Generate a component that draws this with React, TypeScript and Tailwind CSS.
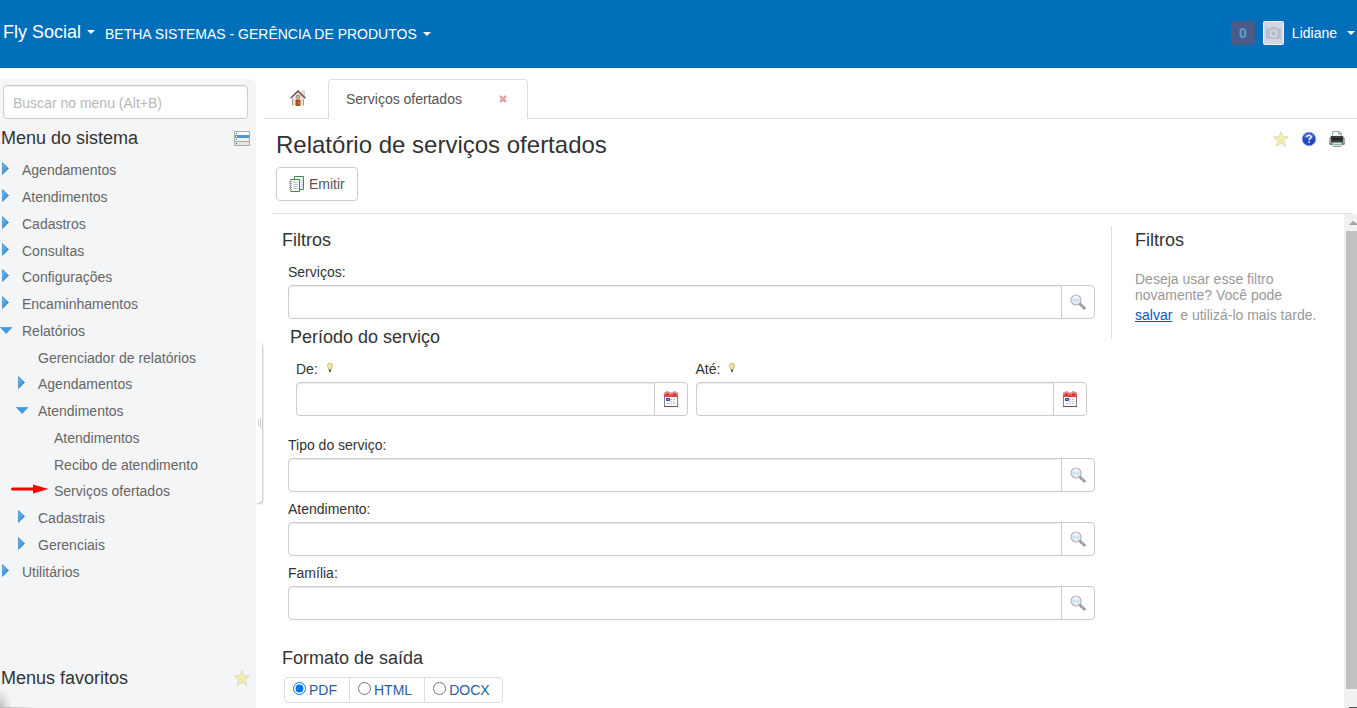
import { useState } from "react";
import type { ReactNode } from "react";

type MenuItem = {
  label: string;
  level: 0 | 1 | 2;
  state?: "open" | "closed";
  marked?: boolean;
};

const menu: MenuItem[] = [
  { label: "Agendamentos", level: 0, state: "closed" },
  { label: "Atendimentos", level: 0, state: "closed" },
  { label: "Cadastros", level: 0, state: "closed" },
  { label: "Consultas", level: 0, state: "closed" },
  { label: "Configurações", level: 0, state: "closed" },
  { label: "Encaminhamentos", level: 0, state: "closed" },
  { label: "Relatórios", level: 0, state: "open" },
  { label: "Gerenciador de relatórios", level: 1 },
  { label: "Agendamentos", level: 1, state: "closed" },
  { label: "Atendimentos", level: 1, state: "open" },
  { label: "Atendimentos", level: 2 },
  { label: "Recibo de atendimento", level: 2 },
  { label: "Serviços ofertados", level: 2, marked: true },
  { label: "Cadastrais", level: 1, state: "closed" },
  { label: "Gerenciais", level: 1, state: "closed" },
  { label: "Utilitários", level: 0, state: "closed" },
];

const indent = { 0: "pl-0", 1: "pl-4", 2: "pl-8" };

function Caret() {
  return (
    <svg width="8" height="4" viewBox="0 0 8 4" className="mb-px fill-white" aria-hidden="true">
      <path d="M0 0h8L4 4z" />
    </svg>
  );
}

function StarIcon() {
  return (
    <svg width="16" height="16" viewBox="0 0 16 16" aria-hidden="true">
      <path
        d="M8 .6l1.9 5.1 5.6.2-4.4 3.4 1.6 6L8 12l-4.7 3.3 1.6-6L.5 5.900l5.600-.2z"
        fill="#f5efb4"
        stroke="#ddd7b8"
        strokeWidth=".9"
      />
      <path d="M8 7l.8 2h2.200l-1.700 1.400.9 2.300L8 11.300l-2.200 1.400.9-2.300L5 9h2.200z" fill="#eee698" />
    </svg>
  );
}

function HelpIcon() {
  return (
    <svg width="16" height="16" viewBox="0 0 16 16" aria-hidden="true">
      <circle cx="8" cy="8" r="6.800" fill="#2447c0" stroke="#8fa3dd" strokeWidth=".8" />
      <path d="M2.500 6.500a5.700 5.700 0 0 1 11 0c-3 1.200-8 1.200-11 0z" fill="#4c6cd8" />
      <path d="M5.900 6.300c0-2.600 4.300-2.600 4.300-.2 0 1.500-2.100 1.500-2.100 3.200" fill="none" stroke="#fff" strokeWidth="1.500" />
      <path d="M7.300 10.500h1.600v1.600H7.300z" fill="#fff" />
    </svg>
  );
}

function PrinterIcon() {
  return (
    <svg width="16" height="16" viewBox="0 0 16 16" aria-hidden="true">
      <path d="M3.500.5h7l2 2V7h-9z" fill="#edf5f5" stroke="#9fb0ae" />
      <path d="M10 .5v2.500h2.500" fill="none" stroke="#7f918f" />
      <path d="M0 8l2-3h12l2 3v5l-1 1H1l-1-1z" fill="#858988" />
      <path d="M2 5h12v6H2z" fill="#3b3e3e" />
      <path d="M3 7h10v2H3z" fill="#232525" />
      <path d="M0 8h2v4H0zM14 8h2v4h-2z" fill="#a9adac" />
      <path d="M3.500 11.500h9v3l-1 1h-7l-1-1z" fill="#d7e6e4" stroke="#7c8c8a" strokeWidth=".8" />
      <path d="M5 13.500h6" stroke="#76b8ae" />
      <path d="M13 11h2v1h-2z" fill="#49c462" />
    </svg>
  );
}

function HouseIcon() {
  return (
    <svg width="16" height="16" viewBox="0 0 16 16" aria-hidden="true">
      <path d="M12 1h2.500v6H12z" fill="#f1ddd2" stroke="#cbb4a9" strokeWidth=".6" />
      <path d="M2.500 8L8 2.200 13.500 8v7.500h-11z" fill="#f2dccd" />
      <path d="M2.500 9v6.500M13.500 9v6.500" stroke="#b29889" />
      <path d="M.7 8.300L8 1l7.300 7.300" fill="none" stroke="#62504b" strokeWidth="1.500" />
      <path d="M6.700 5.500h2.600v2.600H6.700z" fill="#c7d3dc" stroke="#8b5a40" strokeWidth=".7" />
      <path d="M6 10h4v5.500H6z" fill="#b95a25" stroke="#7c3b19" strokeWidth=".8" />
      <path d="M8.500 12.500h1v1h-1z" fill="#f6c67a" />
    </svg>
  );
}

function ReportIcon() {
  return (
    <svg width="16" height="16" viewBox="0 0 16 16" aria-hidden="true">
      <path d="M5.500.5h9v13h-9z" fill="#f2f7fb" stroke="#3d9140" />
      <path d="M12 4.500h2M12 6.500h2M12 8.500h2M12 10.500h2" stroke="#bfd0e6" />
      <path d="M1 3h10v12.500H1z" fill="#fff" />
      <path d="M1.500 3.500h9v12h-9" fill="none" stroke="#3d8a40" />
      <path d="M1.500 4v11" stroke="#9aa59a" strokeDasharray="1 1" />
      <path d="M4 6.500h5M4 8.500h5M4 10.500h5M4 12.500h5" stroke="#bccbe6" />
      <path d="M0 5.500h3M0 7.500h3M0 9.500h3M0 11.500h3M0 13.500h3" stroke="#888" strokeWidth=".7" />
    </svg>
  );
}

function SearchIcon() {
  return (
    <svg width="16" height="16" viewBox="0 0 16 16" aria-hidden="true">
      <path d="M9.700 9.700l4.700 4.500" stroke="#858585" strokeWidth="2.600" strokeLinecap="round" />
      <path d="M10.500 10.300l3.700 3.600" stroke="#dedede" strokeWidth="1" />
      <circle cx="6" cy="6" r="5" fill="#e0edf8" stroke="#b5b7ba" strokeWidth="1.200" />
      <path d="M2.500 6.500c2-1.500 4.500.8 7-.5" fill="none" stroke="#bbd6ef" />
      <path d="M3 4.500a3.500 3.500 0 0 1 5.500-1" fill="none" stroke="#fff" />
    </svg>
  );
}

function CalendarIcon() {
  return (
    <svg width="16" height="16" viewBox="0 0 16 16" aria-hidden="true">
      <path d="M1.500 3.500h13v12h-13z" fill="#fbfdff" stroke="#8d8080" />
      <path d="M1 15.500h14" stroke="#6b5555" />
      <path d="M1 1.500h14V6H1z" fill="#e84444" />
      <path d="M1 2h14v1.500H1z" fill="#f6857e" />
      <path d="M4.500 0v4M11.500 0v4" stroke="#7d2424" strokeWidth="1.600" />
      <path d="M4.500 0v2.500M11.500 0v2.500" stroke="#f4d8d8" strokeWidth=".7" />
      <path d="M7 8.500h6M7 10.500h6M4 12.500h9" stroke="#b1c5dc" strokeDasharray="2 1" />
      <path d="M3.500 7.500h3v2h-3z" fill="#6f98ee" stroke="#2145bd" />
    </svg>
  );
}

function BulbIcon() {
  return (
    <svg width="6" height="10" viewBox="0 0 6 10" className="mb-[2px]" aria-hidden="true">
      <path d="M3 .3c3 0 3.200 2.700 1.500 4.700v2h-3V5C-.2 3 0 .3 3 .3z" fill="#ecdb8d" stroke="#bba566" strokeWidth=".6" />
      <path d="M2 2h1v3H2z" fill="#fffbe0" />
      <path d="M2 6.500h2V9H2z" fill="#66635c" />
    </svg>
  );
}

function ListIcon() {
  return (
    <svg width="16" height="15" viewBox="0 0 16 15" shapeRendering="crispEdges" aria-hidden="true">
      <path d="M0 0h16v15H0z" fill="#ababab" />
      <path d="M1 1h14v3H1z" fill="#fbfbfb" />
      <path d="M1 4h14v3H1z" fill="#4b9bd9" />
      <path d="M1 7h14v3H1z" fill="#f0f0f0" />
      <path d="M1 11h14v3H1z" fill="#e4e4e4" />
      <path d="M2 2h1v1H2zM2 8h1v1H2zM2 12h1v1H2z" fill="#555" />
      <path d="M2 5h1v1H2z" fill="#fff" />
    </svg>
  );
}

function TreeArrow({ state }: { state: "open" | "closed" }) {
  return (
    <svg width="13" height="16" viewBox="0 0 13 16" aria-hidden="true">
      <defs>
        <linearGradient id="tree-arrow" x1="0" y1="0" x2="1" y2="1">
          <stop offset="0" stopColor="#7cc0ef" />
          <stop offset="1" stopColor="#2179c4" />
        </linearGradient>
      </defs>
      {state === "open" ? (
        <path d="M.5 4.500h11.500L6.200 10.500z" fill="#3a9fe2" stroke="#4b9bd6" strokeWidth=".8" />
      ) : (
        <path d="M2.500.6L8.600 6.400 2.500 12.400z" fill="url(#tree-arrow)" stroke="#3f8fd0" strokeWidth=".8" />
      )}
    </svg>
  );
}

function Header() {
  return (
    <header className="flex h-[68px] items-center bg-[#006fba] pr-[2px] pl-[3px] text-white">
      <button type="button" className="mb-1 flex items-center gap-[6px] text-lg leading-5">
        Fly Social
        <Caret />
      </button>
      <button type="button" className="ml-[10px] flex items-center gap-[6px] leading-5">
        BETHA SISTEMAS - GERÊNCIA DE PRODUTOS
        <Caret />
      </button>
      <div className="mb-[2px] ml-auto flex items-center gap-2">
        <span className="flex size-6 items-center justify-center rounded-xs bg-[#4c5a88] font-bold text-[#5a9fd4]">
          0
        </span>
        <button type="button" className="flex items-center gap-2">
          <svg width="21" height="24" viewBox="0 0 21 24" aria-hidden="true">
            <rect x=".5" y=".5" width="20" height="23" rx="1" fill="#d3d7df" stroke="#f0f2f5" />
            <path d="M3 7.500h4L8.500 5.500h4L14 7.500h4V18H3z" fill="#b7bfca" />
            <circle cx="10.500" cy="12.500" r="3.200" fill="#b7bfca" stroke="#d9dde4" strokeWidth="1.400" />
          </svg>
          Lidiane
          <span className="ml-[2px]">
            <Caret />
          </span>
        </button>
      </div>
    </header>
  );
}

function Sidebar() {
  return (
    <aside className="relative flex w-64 shrink-0 flex-col rounded-tr-md bg-[#f3f5f7] pt-[6px] text-[#666]">
      <input
        type="search"
        aria-label="Buscar no menu"
        placeholder="Buscar no menu (Alt+B)"
        className="mr-2 ml-[3px] h-[34px] rounded-sm border border-[#ccc] bg-white px-[9px] pt-[2px] shadow-[inset_0_1px_1px_rgba(0,0,0,0.08)] placeholder:text-[#b8b8b8]"
      />
      <div className="mt-[9px] flex items-center justify-between pr-[6px] pl-px">
        <h2 className="text-lg leading-5 text-[#333]">Menu do sistema</h2>
        <button type="button" aria-label="Exibir como lista">
          <ListIcon />
        </button>
      </div>
      <ul className="mt-[9px] grid h-[428px] auto-rows-fr">
        {menu.map((item, i) => (
          <li key={i} className={indent[item.level]}>
            <a href="#" className="relative flex h-full items-center">
              <span className="w-[22px]">{item.state && <TreeArrow state={item.state} />}</span>
              {item.label}
              {item.marked && (
                <svg width="38" height="10" viewBox="0 0 38 10" className="absolute top-[6px] -left-[21px]" aria-hidden="true">
                  <path d="M1.500 5H24" stroke="#f00" strokeWidth="3" strokeLinecap="round" />
                  <path d="M22 .5L37.500 5 22 9.500z" fill="#f00" />
                </svg>
              )}
            </a>
          </li>
        ))}
      </ul>
      <div className="mt-auto flex items-center justify-between pr-[6px] pb-5 pl-px">
        <h2 className="text-lg leading-5 text-[#333]">Menus favoritos</h2>
        <StarIcon />
      </div>
      <div className="pointer-events-none absolute bottom-0 left-0 h-5 w-3 bg-[radial-gradient(ellipse_at_bottom_left,#bcbdbf_0%,#e2e4e6_45%,#f3f5f7_70%)]" />
      <div className="pointer-events-none absolute bottom-0 left-0 h-px w-10 bg-linear-to-r from-[#b5b6b8] to-[#f3f5f7]" />
    </aside>
  );
}

function Lookup({ id, children, action }: { id: string; children: ReactNode; action: string }) {
  return (
    <div className="flex h-[34px] rounded-sm border border-[#ccc]">
      <input
        id={id}
        type="text"
        className="min-w-0 flex-1 rounded-l-sm px-3 shadow-[inset_0_1px_1px_rgba(0,0,0,0.08)] outline-none"
      />
      <button type="button" aria-label={action} className="flex w-[33px] items-center justify-center border-l border-[#ccc]">
        {children}
      </button>
    </div>
  );
}

function SearchField({ id, label }: { id: string; label: string }) {
  return (
    <div className="flex flex-col gap-[3px]">
      <label htmlFor={id} className="self-start leading-5">
        {label}:
      </label>
      <Lookup id={id} action={`Pesquisar ${label}`}>
        <SearchIcon />
      </Lookup>
    </div>
  );
}

function DateField({ id, label }: { id: string; label: string }) {
  return (
    <div className="flex flex-1 flex-col gap-[3px]">
      <label htmlFor={id} className="flex items-center gap-[9px] self-start leading-5">
        {label}:
        <BulbIcon />
      </label>
      <Lookup id={id} action={`Abrir calendário ${label}`}>
        <CalendarIcon />
      </Lookup>
    </div>
  );
}

function ReportForm() {
  const [format, setFormat] = useState("PDF");

  return (
    <form className="min-w-0 flex-1 pt-4 pr-4 pb-1 pl-[10px] text-[#333]">
      <h2 className="text-lg leading-5">Filtros</h2>
      <div className="mt-3 pl-[6px]">
        <SearchField id="servicos" label="Serviços" />
        <fieldset className="mt-2">
          <legend className="pl-[2px] text-lg leading-5">Período do serviço</legend>
          <div className="mt-3 flex gap-2 px-2">
            <DateField id="de" label="De" />
            <DateField id="ate" label="Até" />
          </div>
        </fieldset>
        <div className="mt-[19px] flex flex-col gap-[7px]">
          <SearchField id="tipo" label="Tipo do serviço" />
          <SearchField id="atendimento" label="Atendimento" />
          <SearchField id="familia" label="Família" />
        </div>
      </div>
      <fieldset className="mt-7">
        <legend className="text-lg leading-5">Formato de saída</legend>
        <div className="mt-[9px] ml-[2px] inline-flex h-[26px] divide-x divide-[#ddd] rounded-sm border border-[#ddd] align-top text-[#2a5d9c]">
          {["PDF", "HTML", "DOCX"].map((name) => (
            <label key={name} className="flex items-center gap-[3px] pr-3 pl-2">
              <input
                type="radio"
                name="formato"
                checked={format === name}
                onChange={() => setFormat(name)}
                className="mb-[3px] size-[13px]"
              />
              {name}
            </label>
          ))}
        </div>
      </fieldset>
    </form>
  );
}

export default function App() {
  return (
    <div className="flex min-h-screen flex-col bg-white font-['Liberation_Sans',Arial,sans-serif] text-sm">
      <Header />
      <div className="mt-[11px] flex flex-1">
        <Sidebar />
        <button
          type="button"
          aria-label="Recolher menu"
          className="mt-[263px] flex h-[161px] w-[6px] shrink-0 items-center justify-center gap-px rounded-r-sm bg-white shadow-[1px_1px_2px_rgba(0,0,0,0.25)]"
        >
          <span className="h-[6px] w-px bg-[#ccc]" />
          <span className="h-[10px] w-px bg-[#ccc]" />
        </button>
        <main className="ml-[2px] flex min-w-0 flex-1 flex-col">
          <div className="flex h-10 text-[#555]">
            <a href="#" aria-label="Início" className="flex w-16 items-center justify-center border-b border-[#ddd] pb-px pl-1">
              <HouseIcon />
            </a>
            <div className="flex w-[200px] items-center justify-between rounded-t-sm border border-b-0 border-[#ddd] pr-5 pb-[2px] pl-[17px]">
              <a href="#">Serviços ofertados</a>
              <button type="button" aria-label="Fechar aba">
                <svg width="8" height="8" viewBox="0 0 8 8" aria-hidden="true">
                  <path d="M1 1l6 6M7 1L1 7" stroke="#e6a5a5" strokeWidth="2.600" />
                </svg>
              </button>
            </div>
            <div className="flex-1 border-b border-[#ddd]" />
          </div>

          <div className="mr-1 ml-2 border-b border-[#ddd] pb-3 pl-1">
            <div className="flex items-start justify-between pt-3">
              <h1 className="pt-[2px] text-2xl leading-6 text-[#333]">Relatório de serviços ofertados</h1>
              <div className="flex gap-3 pr-2">
                <button type="button" aria-label="Favoritar">
                  <StarIcon />
                </button>
                <button type="button" aria-label="Ajuda">
                  <HelpIcon />
                </button>
                <button type="button" aria-label="Imprimir">
                  <PrinterIcon />
                </button>
              </div>
            </div>
            <button
              type="button"
              className="mt-[10px] flex h-[34px] items-center gap-1 rounded-sm border border-[#ccc] px-3 text-[#555]"
            >
              <ReportIcon />
              Emitir
            </button>
          </div>

          <div className="ml-2 flex flex-1">
            <ReportForm />
            <section className="mt-3 h-[113px] w-[233px] shrink-0 border-l border-[#ddd] pt-1 pl-[23px]">
              <h2 className="text-lg leading-5 text-[#333]">Filtros</h2>
              <p className="mt-[21px] leading-4 text-[#999]">
                Deseja usar esse filtro
                <br />
                novamente? Você pode
              </p>
              <p className="mt-1 leading-4 text-[#999]">
                <a href="#" className="mr-1 text-[#0059c1] underline">
                  salvar
                </a>{" "}
                e utilizá-lo mais tarde.
              </p>
            </section>
            <div className="flex w-[13px] shrink-0 flex-col items-end bg-[#f1f1f1]" aria-hidden="true">
              <svg width="11" height="17" viewBox="0 0 11 17">
                <path d="M3 11h8V10L7 7z" fill="#a0a0a0" />
              </svg>
              <div className="w-[11px] flex-1 bg-[#c1c1c1]" />
              <svg width="11" height="19" viewBox="0 0 11 19">
                <path d="M3 18h8v1H3z" fill="#505050" />
              </svg>
            </div>
          </div>
        </main>
      </div>
    </div>
  );
}
